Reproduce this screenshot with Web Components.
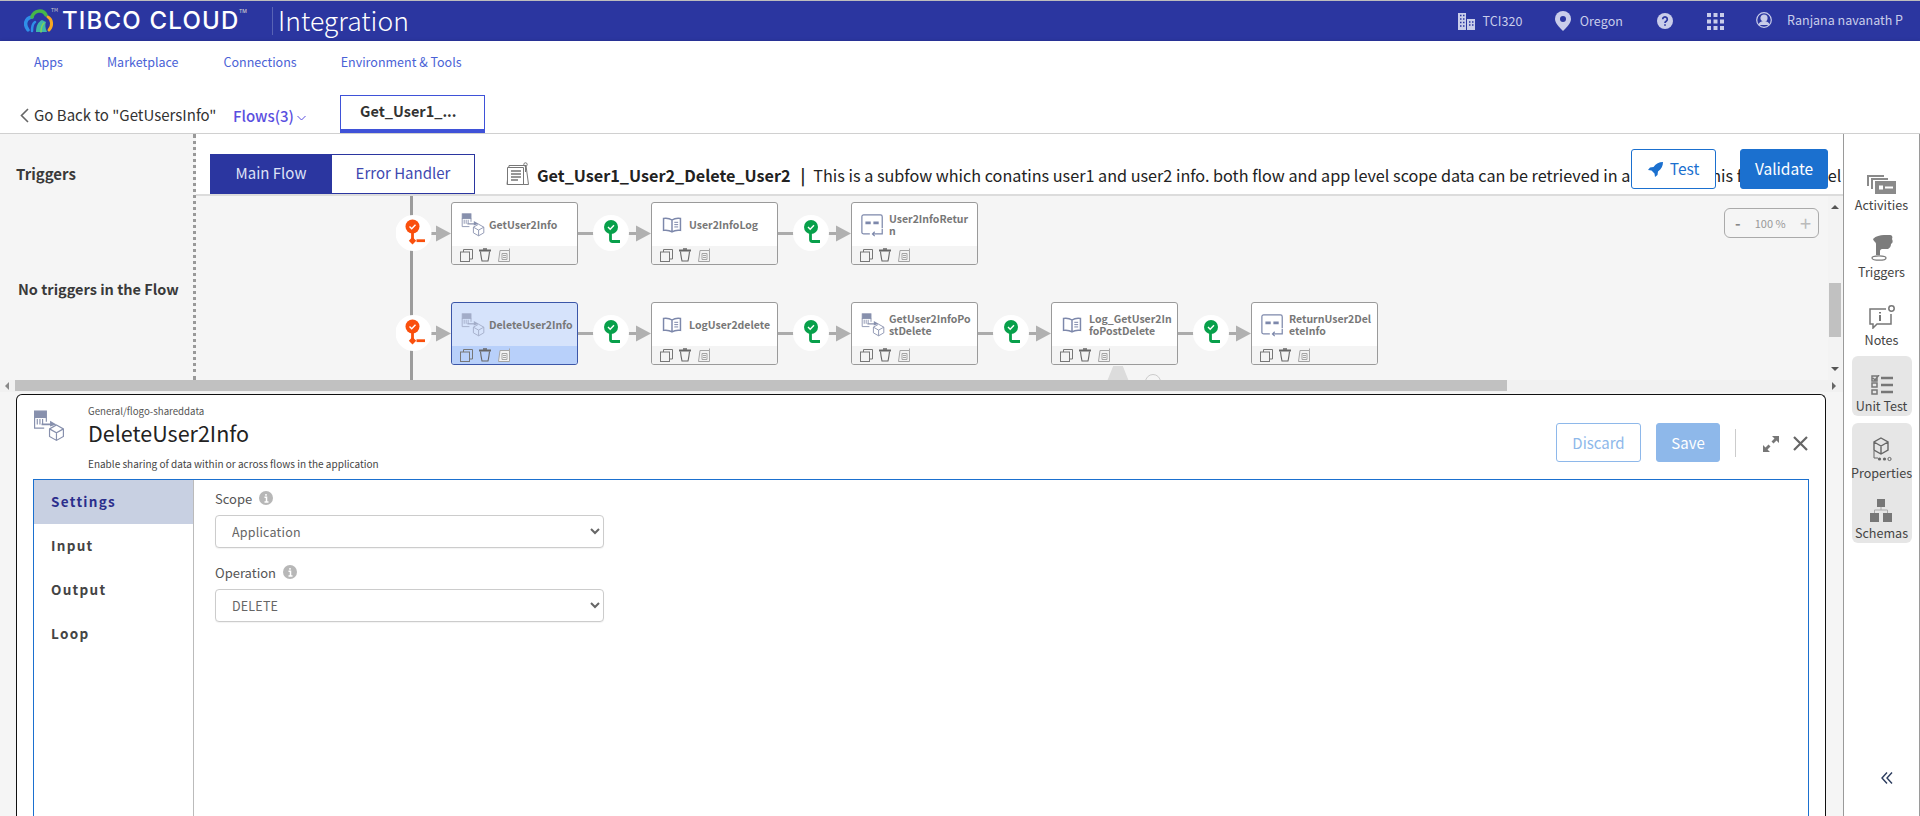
<!DOCTYPE html>
<html>
<head>
<meta charset="utf-8">
<title>TIBCO Cloud Integration</title>
<style>
    html, body { margin: 0; height: 816px; overflow: hidden; background: #fff; }
    body { font-family: "Noto Sans CJK SC", "Noto Sans", sans-serif; color: #333; display: flex; flex-direction: column; border-top: 1px solid #bdbdbd; box-sizing: border-box; }
    flow-workspace { flex: 1; min-height: 0; }
</style>
</head>
<body>
<app-header></app-header>
<app-nav></app-nav>
<flow-bar></flow-bar>
<flow-workspace>
    <flow-canvas slot="canvas">
        <flow-row>
            <flow-link kind="branch"></flow-link>
            <flow-node name="GetUser2Info" kind="data"></flow-node>
            <flow-link></flow-link>
            <flow-node name="User2InfoLog" kind="log"></flow-node>
            <flow-link></flow-link>
            <flow-node name="User2InfoRetur|n" kind="ret"></flow-node>
        </flow-row>
        <flow-row>
            <flow-link kind="branch"></flow-link>
            <flow-node name="DeleteUser2Info" kind="data" selected></flow-node>
            <flow-link></flow-link>
            <flow-node name="LogUser2delete" kind="log"></flow-node>
            <flow-link></flow-link>
            <flow-node name="GetUser2InfoPo|stDelete" kind="data"></flow-node>
            <flow-link></flow-link>
            <flow-node name="Log_GetUser2In|foPostDelete" kind="log"></flow-node>
            <flow-link></flow-link>
            <flow-node name="ReturnUser2Del|eteInfo" kind="ret"></flow-node>
        </flow-row>
    </flow-canvas>
    <detail-panel slot="panel"></detail-panel>
    <side-palette slot="side"></side-palette>
</flow-workspace>

<script>
(() => {
    const FONT = '"Noto Sans CJK SC", "Noto Sans", sans-serif';

    const icons = {
        data: `<svg width="30" height="30" viewBox="0 0 30 30" fill="none" stroke="#8790ad" stroke-width="1.1">
            <rect x="1.5" y="1" width="11" height="6" fill="#8790ad"/>
            <path d="M1.5 7v10h9M4 8.5v5M6.5 8.5v5M9 8.5v5M12.5 7v4"/>
            <path d="M8 13.5h10" stroke-width="1.6"/><path d="M16 10l6 3.5-6 2z" fill="#8790ad" stroke="none"/>
            <path d="M22 14l6.500 3.700v7.100L22 28.500l-6.500-3.700v-7.100zM15.500 17.700l6.500 3.700 6.500-3.700M22 21.400v7.100"/>
        </svg>`,
        log: `<svg width="26" height="26" viewBox="0 0 26 26" fill="none" stroke="#7d88ab" stroke-width="1.9">
            <path d="M13 6.500C10 4.500 6 4 2 4.500v15.500c4-.5 8 0 11 2 3-2 7-2.500 11-2V4.500c-4-.5-8 0-11 2zM13 6.500V22"/>
            <path d="M16 9.500h5M16 12.500h5M16 15.500h5" stroke-width="1.300"/>
        </svg>`,
        ret: `<svg width="26" height="26" viewBox="0 0 26 26" fill="none" stroke="#7d88ab" stroke-width="1.4">
            <path d="M10 22.500H3a2 2 0 0 1-2-2V3a2 2 0 0 1 2-2h19a2 2 0 0 1 2 2v13"/>
            <path d="M5 10h6M14 10h6" stroke-width="3"/>
            <path d="M24 17v5.500H13M15.500 20l-2.500 2.500 2.500 2.500"/>
        </svg>`,
        copy: `<svg width="13" height="13" viewBox="0 0 13 13" fill="none" stroke="#777"><rect x=".5" y="3" width="9" height="9.500"/><path d="M3.500 3V.5h9v9.500H9.500"/></svg>`,
        trash: `<svg width="12" height="14" viewBox="0 0 12 14" fill="none" stroke="#666" stroke-width="1.100"><path d="M0 2.500h12" stroke-width="1.800"/><path d="M4 1h4" stroke-width="1.400"/><path d="M1.500 3.500c.3 3 .7 6 1.500 9.500h6c.8-3.500 1.200-6.500 1.500-9.500"/></svg>`,
        note: `<svg width="15" height="14" viewBox="0 0 15 14" fill="none" stroke="#a5a5a5"><path d="M3 2.500h9.500V13.500H1.500z" fill="#f2f2f2"/><path d="M5 5.500h5v6h-5zM6 7.500h3M6 9.500h3"/><path d="M12.500 2.500V.5"/></svg>`
    };

    // small helper so every element gets an open shadow root from a template
    function define(name, html, ready) {
        const template = document.createElement('template');
        template.innerHTML = html;
        customElements.define(name, class extends HTMLElement {
            constructor() {
                super();
                this.root = this.attachShadow({ mode: 'open' });
                this.root.appendChild(template.content.cloneNode(true));
            }
            connectedCallback() {
                if (ready) ready(this, this.root);
            }
        });
    }

    define('app-header', `
        <style>
            :host { display: flex; align-items: center; height: 40px; background: #2b36a0; color: #c9cdea; font-family: ${FONT}; flex: none; }
            .logo { margin-left: 24px; width: 30px; height: 26px; flex: none; }
            .tm0 { font-size: 5px; line-height: 6px; color: #ccc; margin: -22px 0 0 -3px; width: 11px; flex: none; }
            .brand { font: 500 24px/40px Inter, sans-serif; letter-spacing: 1.200px; color: #fff; width: 210px; flex: none; white-space: nowrap; position: relative; }
            .tm { font-size: 5px; position: absolute; top: -10px; left: 177px; color: #ccc; letter-spacing: 0; }
            .sep { width: 1px; height: 28px; background: #5963b5; margin: 0 5px 0 0; flex: none; }
            .product { font-size: 26.500px; font-weight: 300; color: #fff; line-height: 40px; margin-top: -3px; }
            .right { margin-left: auto; display: flex; align-items: center; font-size: 12.500px; line-height: 40px; letter-spacing: .1px; }
            svg { display: block; }
        </style>
        <svg class="logo" viewBox="0 0 30 26" fill="none" stroke-linecap="round">
            <path d="M4 22C0 17 1 10 8 9" stroke="#2f8fe8" stroke-width="3.500"/>
            <path d="M8 9C10 2 19 1 22 7" stroke="#46b649" stroke-width="3.500"/>
            <path d="M24 9c4 2 5 9 1 13" stroke="#f7a823" stroke-width="3"/>
            <path d="M11 14c-3 2-3 6-3 9" stroke="#2f8fe8" stroke-width="2.500"/>
            <path d="M18 12c-4 2-6 6-6 12h11c-2-4-2-8-1-10z" fill="#3fb6a8"/>
            <path d="M17 24c0-4 1-7 3-9" stroke="#7dd35a" stroke-width="1.500"/>
        </svg>
        <div class="tm0">TM</div>
        <div class="brand">TIBCO CLOUD<span class="tm">TM</span></div>
        <div class="sep"></div>
        <div class="product">Integration</div>
        <div class="right">
            <svg style="margin-right:7px" width="17" height="17" viewBox="0 0 17 17" fill="#c9cdea"><path d="M0 0h8v17H0zM9 6h8v11H9z"/><path d="M2 2.500h1.500M5 2.500h1.500M2 6h1.500M5 6h1.500M2 9.500h1.500M5 9.500h1.500M2 13h1.500M5 13h1.500M11 9h1.500M14 9h1.500M11 12h1.500M14 12h1.500" stroke="#2b36a0" stroke-width="1.500"/></svg>
            <span style="margin-right:32px">TCI320</span>
            <svg style="margin-right:9px" width="16" height="20" viewBox="0 0 16 20"><path d="M8 0a8 8 0 0 1 8 8c0 4-4 8-8 12-4-4-8-8-8-12a8 8 0 0 1 8-8z" fill="#c9cdea"/><circle cx="8" cy="8" r="3" fill="#2b36a0"/></svg>
            <span style="margin-right:34px">Oregon</span>
            <svg style="margin-right:34px" width="16" height="16" viewBox="0 0 16 16"><circle cx="8" cy="8" r="8" fill="#c9cdea"/><path d="M5.700 6.200a2.300 2.300 0 1 1 3.500 2c-.8.500-1.200.9-1.200 1.700M8 11.300v1.500" fill="none" stroke="#2b36a0" stroke-width="1.700"/></svg>
            <svg style="margin-right:32px" width="17" height="17" viewBox="0 0 17 17" fill="#c9cdea"><path d="M0 0h4v4H0zM6.500 0h4v4h-4zM13 0h4v4h-4zM0 6.500h4v4H0zM6.500 6.500h4v4h-4zM13 6.500h4v4h-4zM0 13h4v4H0zM6.500 13h4v4h-4zM13 13h4v4h-4z"/></svg>
            <svg style="margin-right:15px;margin-top:-3px" width="16" height="16" viewBox="0 0 16 16" fill="none" stroke="#c9cdea" stroke-width="1.200"><circle cx="8" cy="8" r="7.300"/><circle cx="8" cy="6" r="3" fill="#c9cdea"/><path d="M2.800 13c1-2.300 3-3.300 5.200-3.300s4.200 1 5.200 3.300" fill="#c9cdea"/></svg>
            <span style="margin-right:17px;margin-top:-2px;letter-spacing:0">Ranjana navanath P</span>
        </div>
    `);

    define('app-nav', `
        <style>
            :host { display: flex; height: 44px; box-sizing: border-box; padding-bottom: 2px; align-items: center; background: #fff; box-shadow: 0 1px 4px rgba(0,0,0,.28); position: relative; flex: none; font: 12.500px/20px ${FONT}; color: #4a62d6; }
            span { white-space: nowrap; }
        </style>
        <span style="margin-left:34px">Apps</span>
        <span style="margin-left:44px">Marketplace</span>
        <span style="margin-left:45px">Connections</span>
        <span style="margin-left:44px">Environment &amp; Tools</span>
    `);

    define('flow-bar', `
        <style>
            :host { display: flex; height: 49px; box-sizing: border-box; border-bottom: 1px solid #d0d0d0; flex: none; background: #fff; font-family: ${FONT}; position: relative; }
            .back { display: flex; align-items: center; margin-left: 20px; font-size: 15px; line-height: 20px; color: #333; margin-top: 13px; height: 34px; width: 213px; white-space: nowrap; }
            .back svg { margin-right: 5px; }
            .flows { display: flex; align-items: center; font-size: 15px; font-weight: 500; color: #5a4fe0; line-height: 20px; height: 34px; margin-top: 14px; width: 107px; }
            .flows svg { margin-left: 3px; margin-top: 3px; }
            .tab { width: 145px; height: 38px; box-sizing: border-box; margin-top: 10px; border: 1px solid #3f52d8; border-bottom: 4px solid #3f52d8; font-size: 14.500px; font-weight: 700; line-height: 30px; padding-left: 19px; color: #333; }
        </style>
        <div class="back">
            <svg width="9" height="15" viewBox="0 0 9 15" fill="none" stroke="#666" stroke-width="1.600"><path d="M8 1L1.500 7.500 8 14"/></svg>
            Go Back to "GetUsersInfo"
        </div>
        <div class="flows">Flows(3)
            <svg width="9" height="6" viewBox="0 0 9 6" fill="none" stroke="#5a4fe0"><path d="M.5 1l4 4 4-4"/></svg>
        </div>
        <div class="tab">Get_User1_...</div>
    `);

    define('flow-workspace', `
        <style>
            :host { display: flex; background: #f5f5f5; font-family: ${FONT}; }
            .left { width: 1843px; flex: none; display: flex; flex-direction: column; min-height: 0; }
            .upper { display: flex; height: 246px; flex: none; }
            .triggers { width: 196px; box-sizing: border-box; flex: none; border-right: 3px dotted #999; font-size: 15px; font-weight: 700; line-height: 20px; color: #3a3a3a; }
            .triggers div:first-child { margin: 30px 0 0 16px; }
            .triggers div:last-child { margin: 95px 0 0 18px; font-size: 14.500px; }
            .main { flex: 1; min-width: 0; display: flex; flex-direction: column; }
            .hbar { height: 12px; flex: none; display: flex; background: #f1f1f1; position: relative; }
            .hbar i { display: block; margin-left: 15px; width: 1492px; height: 11px; background: #c1c1c1; }
            .hbar b { position: absolute; top: 2px; width: 0; height: 0; border: 4px solid transparent; }
            .hbar .l { left: 1px; border-right-color: #888; }
            .hbar .r { left: 1832px; border-left-color: #666; }
            ::slotted(detail-panel) { flex: 1; min-height: 0; }
        </style>
        <div class="left">
            <div class="upper">
                <div class="triggers"><div>Triggers</div><div>No triggers in the Flow</div></div>
                <div class="main">
                    <flow-toolbar></flow-toolbar>
                    <slot name="canvas"></slot>
                </div>
            </div>
            <div class="hbar"><b class="l"></b><i></i><b class="r"></b></div>
            <slot name="panel"></slot>
        </div>
        <slot name="side"></slot>
    `);

    define('flow-toolbar', `
        <style>
            :host { display: flex; height: 60px; flex: none; background: #fff; position: relative; overflow: hidden; font-family: ${FONT}; }
            .tabs { display: flex; margin: 20px 0 0 14px; height: 40px; box-sizing: border-box; border: 1px solid #2b36a0; font-size: 15px; line-height: 36px; text-align: center; flex: none; }
            .tabs div { width: 122px; color: #3f49b0; }
            .tabs div:first-child { background: #2b36a0; color: #dfe2f6; margin: -1px 0 -1px -1px; padding: 1px 0; }
            .title { display: flex; align-items: center; margin: 26px 0 0 30px; height: 30px; white-space: nowrap; font-size: 16.200px; line-height: 24px; color: #222; flex: none; }
            .title svg { margin-right: 7px; margin-top: -2px; }
            .title b { font-weight: 700; }
            .title .pipe { margin: 0 8px 0 10px; font-weight: 700; }
            .btn { position: absolute; top: 15px; height: 40px; box-sizing: border-box; border-radius: 3px; font-size: 15.500px; line-height: 36px; text-align: center; }
            .test { left: 1435px; width: 85px; border: 1px solid #1b70cf; background: #fff; color: #1b70cf; display: flex; justify-content: center; align-items: center; padding-bottom: 2px; }
            .test svg { margin-right: 7px; margin-top: 2px; }
            .validate { left: 1544px; width: 88px; background: #1b70cf; color: #fff; border: 1px solid #1b70cf; }
        </style>
        <div class="tabs"><div>Main Flow</div><div style="width:142px">Error Handler</div></div>
        <div class="title">
            <svg width="25" height="24" viewBox="0 0 25 24" fill="none" stroke="#777"><path d="M4 3.500h17L23.500 22.500H2z" fill="#fff"/><path d="M2.500 5.500h16v17h-16z" fill="#fff"/><path d="M6 9h10M6 12h10M6 15h10M6 18h7" stroke-width="1.300"/><circle cx="20.500" cy="2.500" r="1.700"/><path d="M20.500 4v6"/></svg>
            <b>Get_User1_User2_Delete_User2</b><span class="pipe">|</span><span>This is a subfow which conatins user1 and user2 info. both flow and app level scope data can be retrieved in a subflow. This flow app level</span>
        </div>
        <div class="btn test">
            <svg width="15" height="15" viewBox="0 0 15 15" fill="#1b70cf"><path d="M15 0c-4 0-7 1.500-9.500 5L2 5.500 0 8l3.500 .5 3 3L7 15l2.500-2 .5-3.500C13.500 7 15 4 15 0z"/></svg>
            Test
        </div>
        <div class="btn validate">Validate</div>
    `);

    define('flow-canvas', `
        <style>
            :host { display: flex; flex-direction: column; flex: 1; min-height: 0; gap: 37px; box-sizing: border-box; padding: 6px 0 0 200px; background: #f5f5f5; border-top: 2px solid #dcdcdc; position: relative; overflow: hidden; }
            .trunk { position: absolute; left: 214px; top: 0; bottom: 0; width: 3px; background: #9c9c9c; }
            .zoom { position: absolute; left: 1528px; top: 12px; width: 95px; height: 30px; box-sizing: border-box; border: 1px solid #aaa; border-radius: 6px; display: flex; align-items: center; justify-content: space-between; padding: 0 7px 0 10px; color: #999; font-size: 11px; line-height: 16px; }
            .zoom b { font-size: 15px; font-weight: 700; color: #888; }
            .zoom b:last-child { font-size: 20px; color: #bbb; font-weight: 400; }
            .vbar { position: absolute; right: 1px; top: 0; bottom: 0; width: 14px; background: #f3f3f3; }
            .vbar i { position: absolute; left: 1px; top: 87px; width: 12px; height: 54px; background: #c1c1c1; }
            .vbar b { position: absolute; left: 3px; width: 0; height: 0; border: 4px solid transparent; }
            .ghost { position: absolute; left: 910px; top: 170px; width: 24px; height: 18px; background: #dcdcdc; clip-path: polygon(30% 0, 70% 0, 100% 100%, 0 100%); }
            .ring { position: absolute; left: 949px; top: 178px; width: 14px; height: 14px; border: 1px solid #ccc; border-radius: 50%; }
        </style>
        <div class="trunk"></div>
        <div class="ghost"></div><div class="ring"></div>
        <slot></slot>
        <div class="zoom"><b>-</b><span>100 %</span><b>+</b></div>
        <div class="vbar"><b style="top:5px;border-bottom-color:#555"></b><i></i><b style="top:171px;border-top-color:#555"></b></div>
    `);

    define('flow-row', `
        <style>:host { display: flex; height: 63px; position: relative; flex: none; }</style>
        <slot></slot>
    `);

    const PIN_CHECK = '<path d="M-3 0l2.200 2.200L3-1.800" fill="none" stroke="#fff" stroke-width="1.400"/>';

    define('flow-link', `
        <style>:host { display: block; flex: none; } svg { display: block; }</style>
    `, (el, root) => {
        const branch = el.getAttribute('kind') === 'branch';
        const w = branch ? 55 : 73;
        const cx = branch ? 17.5 : 33;
        const art = branch
            ? `<g transform="translate(${cx - 1},24.500)"><circle r="7" fill="#fa4f0c"/>${PIN_CHECK}<path d="M0 5v9" stroke="#fa4f0c" stroke-width="2.800"/><path d="M0 10.500l3.700 3.700L0 18l-3.700-3.800z" fill="#fa4f0c"/><path d="M4 14.200h8.500" stroke="#fa4f0c" stroke-width="2.800"/></g>`
            : `<g transform="translate(${cx},25)"><circle r="7" fill="#08a04b"/>${PIN_CHECK}<path d="M-.5 6v6.500q0 2 2 2H9" fill="none" stroke="#08a04b" stroke-width="2.800"/></g>`;
        root.innerHTML += `<svg width="${w}" height="63" viewBox="0 0 ${w} 63">
            <path d="M0 31.500H${w - 10}" stroke="#ababab" stroke-width="3"/>
            <circle cx="${cx}" cy="31" r="18" fill="#fff"/>
            <path d="M${w - 15} 23.500L${w} 31.500L${w - 15} 39.500z" fill="#b0b0b0"/>
            ${art}
        </svg>`;
    });

    define('flow-node', `
        <style>
            :host { display: flex; flex-direction: column; flex: none; width: 127px; height: 63px; box-sizing: border-box; border: 1px solid #9a9a9a; border-radius: 3px; background: #fff; overflow: hidden; font-family: ${FONT}; }
            :host([selected]) { background: #d6e3fb; border-color: #3b56a8; }
            .body { flex: 1; display: flex; align-items: center; min-height: 0; }
            .ic { width: 37px; box-sizing: border-box; flex: none; display: flex; margin-top: 1px; }
            :host([selected]) .ic { opacity: .65; }
            .name { white-space: nowrap; font-size: 10.500px; font-weight: 700; line-height: 12px; color: #777; margin-top: 1px; }
            .foot { height: 18px; flex: none; background: #f4f4f4; display: flex; align-items: center; gap: 6px; padding-left: 8px; }
            :host([selected]) .foot { background: #b8d0fa; }
            svg { display: block; }
        </style>
        <div class="body"><div class="ic"></div><div class="name"></div></div>
        <div class="foot"></div>
    `, (el, root) => {
        const kind = el.getAttribute('kind');
        const ic = root.querySelector('.ic');
        ic.innerHTML = icons[kind];
        const svg = ic.firstElementChild;
        const size = { data: 24, log: 20, ret: 23 }[kind];
        svg.setAttribute('width', size);
        svg.setAttribute('height', size);
        ic.style.paddingLeft = { data: '9px', log: '10px', ret: '9px' }[kind];
        // the app wraps long names mid word, "|" marks where
        const name = root.querySelector('.name');
        el.getAttribute('name').split('|').forEach((part, i) => {
            if (i) name.appendChild(document.createElement('br'));
            name.appendChild(document.createTextNode(part));
        });
        root.querySelector('.foot').innerHTML = icons.copy + icons.trash + icons.note;
    });

    define('side-item', `
        <style>
            :host { display: flex; flex-direction: column; align-items: center; justify-content: flex-end; color: #444; font: 12.600px/16px ${FONT}; white-space: nowrap; }
            svg { display: block; }
        </style>
        <slot name="icon"></slot>
        <div style="margin-top:3px"><slot></slot></div>
    `);

    define('side-palette', `
        <style>
            :host { display: flex; flex-direction: column; align-items: center; width: 77px; flex: none; box-sizing: border-box; background: #fff; border-left: 1px solid #9a9a9a; border-right: 1px solid #9a9a9a; position: relative; font-family: ${FONT}; padding-top: 41px; }
            .grp { width: 60px; background: #e6e6e6; border-radius: 6px; display: flex; flex-direction: column; align-items: center; }
            .chev { position: absolute; left: 37px; top: 638px; font-size: 0; }
        </style>
        <side-item>
            <svg slot="icon" width="29" height="19" viewBox="0 0 29 19" fill="#8a8a8a"><path d="M0 0h17v2H2v9H0zM4 3h17v2H6v9H4z"/><path d="M8 6h21v13H8z"/><path d="M12 10.500h4v4h-4zM18 11.500h8v2h-8z" fill="#fff"/></svg>
            Activities
        </side-item>
        <side-item style="margin-top:22px">
            <svg slot="icon" width="22" height="26" viewBox="0 0 22 26" fill="#7c7c7c"><path d="M2 4C5 1 9 0 13 0h6c2 0 3 2 2 4 1 2 1 4-1 5 0 2-1 4-3 5h-6c-1 0-2 1-2 2v4H5V9C5 7 3 7 2 4z"/><ellipse cx="8" cy="23" rx="7" ry="2.200" fill="none" stroke="#7c7c7c" stroke-width="1.300"/></svg>
            Triggers
        </side-item>
        <side-item style="margin-top:25px">
            <svg slot="icon" width="26" height="24" viewBox="0 0 26 24" fill="none" stroke="#777" stroke-width="1.500"><path d="M17 4H1v15h3v4l4-4h14v-10"/><path d="M11 7v1.500M11 10v6" stroke-width="2"/><circle cx="22.500" cy="3.500" r="2.700"/></svg>
            Notes
        </side-item>
        <div class="grp" style="margin-top:8px;height:60px;justify-content:flex-end;padding-bottom:2px;box-sizing:border-box">
            <side-item>
                <svg slot="icon" width="22" height="20" viewBox="0 0 22 20" fill="none" stroke="#777" stroke-width="1.500"><path d="M1 1h5v5H1zM1 8h5v4H1zM1 15h5v4H1zM2 3l2 2 4-5"/><path d="M10 3h12M10 10h12M10 17h12" stroke-width="2.500"/></svg>
                Unit Test
            </side-item>
        </div>
        <div class="grp" style="margin-top:7px;height:120px;padding-top:14px;box-sizing:border-box">
            <side-item>
                <svg slot="icon" width="20" height="25" viewBox="0 0 20 25" fill="none" stroke="#666" stroke-width="1.400"><path d="M9 1l7 4v8l-7 4-7-4V5zM2 5l7 4 7-4M9 9v8"/><path d="M2 14v7h4" stroke-width="1"/><circle cx="7.500" cy="22" r="1.600" fill="#666" stroke="none"/><circle cx="12.500" cy="22" r="1.600" fill="#666" stroke="none"/><circle cx="17.500" cy="22" r="1.600" fill="none" stroke-width="1"/></svg>
                Properties
            </side-item>
            <side-item style="margin-top:18px">
                <svg slot="icon" width="22" height="23" viewBox="0 0 22 23" fill="#777"><path d="M7 0h8v8H7zM0 14h9v9H0zM13 14h9v9h-9z"/><path d="M11 8v3M4.500 14v-3h13v3" fill="none" stroke="#aaa"/></svg>
                Schemas
            </side-item>
        </div>
        <svg class="chev" width="12" height="12" viewBox="0 0 12 12" fill="none" stroke="#2b3c5e" stroke-width="1.400"><path d="M6 .5L1 6l5 5.500M11 .5L6 6l5 5.500"/></svg>
    `);

    define('form-field', `
        <style>
            :host { display: block; width: 389px; font-family: ${FONT}; }
            .lbl { display: flex; align-items: center; font-size: 13px; line-height: 20px; color: #555; }
            .lbl svg { margin-left: 7px; margin-top: -3px; }
            select { display: block; width: 100%; height: 33px; margin-top: 6px; box-sizing: border-box; padding: 0 12px; border: 1px solid #ccc; border-radius: 4px; background: #fff; color: #666; font: 12.500px ${FONT}; letter-spacing: .2px; box-shadow: 0 1px 1px rgba(0,0,0,.05); outline: none; }
        </style>
        <div class="lbl"><span></span>
            <svg width="14" height="14" viewBox="0 0 14 14"><circle cx="7" cy="7" r="7" fill="#b7b7b7"/><path d="M7 3v1.800M5.500 6.300H7.500v4.500M5.500 11h4" stroke="#fff" stroke-width="1.500" fill="none"/></svg>
        </div>
        <select><option></option></select>
    `, (el, root) => {
        root.querySelector('.lbl span').textContent = el.getAttribute('label');
        root.querySelector('option').textContent = el.getAttribute('value');
    });

    define('detail-panel', `
        <style>
            :host { display: flex; flex-direction: column; margin: 2px 17px 0 16px; box-sizing: border-box; border: 1.500px solid #111; border-bottom: 0; border-radius: 6px 6px 0 0; background: #fff; overflow: hidden; font-family: ${FONT}; }
            .head { display: flex; height: 84px; flex: none; padding: 0 16px; box-sizing: border-box; position: relative; }
            .ic { width: 55px; padding-top: 15px; flex: none; }
            .ic svg { display: block; width: 32px; height: 32px; }
            .txt { flex: 1; padding-top: 9px; color: #333; }
            .sub { font-size: 9.700px; line-height: 14px; color: #555; }
            .name { font-size: 21.500px; line-height: 28px; margin-top: 1px; color: #222; }
            .desc { font-size: 10px; line-height: 14px; color: #444; margin-top: 10px; }
            .acts { display: flex; align-items: flex-start; padding-top: 28px; }
            .btn { box-sizing: border-box; height: 39px; border-radius: 3px; font-size: 15px; line-height: 38px; text-align: center; }
            .discard { width: 85px; border: 1px solid #8eb8ea; color: #8eb8ea; }
            .save { width: 64px; margin-left: 15px; background: #8eb8ea; color: #fff; border: 1px solid #8eb8ea; }
            .div { width: 1px; height: 28px; background: #ccc; margin: 6px 27px 0 15px; }
            .acts svg { margin-top: 13px; display: block; }
            .box { flex: 1; min-height: 0; margin: 0 16px; border: 1px solid #1b70cf; border-bottom: 0; display: flex; }
            .menu { width: 160px; flex: none; box-sizing: border-box; border-right: 1px solid #bbb; font-size: 13.500px; font-weight: 700; letter-spacing: 1.300px; color: #444; }
            .menu div { height: 44px; line-height: 42px; padding-left: 17px; }
            .menu .on { background: #c8d0e2; color: #2b2e8c; }
            .form { padding: 9px 0 0 21px; display: flex; flex-direction: column; gap: 15px; }
        </style>
        <div class="head">
            <div class="ic">${icons.data}</div>
            <div class="txt">
                <div class="sub">General/flogo-shareddata</div>
                <div class="name">DeleteUser2Info</div>
                <div class="desc">Enable sharing of data within or across flows in the application</div>
            </div>
            <div class="acts">
                <div class="btn discard">Discard</div>
                <div class="btn save">Save</div>
                <div class="div"></div>
                <svg width="16" height="16" viewBox="0 0 16 16" fill="#777"><path d="M16 0v7l-2.500-2.500-3 3-2-2 3-3L9 0zM0 16V9l2.500 2.500 3-3 2 2-3 3L7 16z"/></svg>
                <svg style="margin:13px 1px 0 14px" width="15" height="15" viewBox="0 0 15 15" fill="none" stroke="#666" stroke-width="2.200"><path d="M1 1l13 13M14 1L1 14"/></svg>
            </div>
        </div>
        <div class="box">
            <div class="menu"><div class="on">Settings</div><div>Input</div><div>Output</div><div>Loop</div></div>
            <div class="form">
                <form-field label="Scope" value="Application"></form-field>
                <form-field label="Operation" value="DELETE"></form-field>
            </div>
        </div>
    `);
})();
</script>
</body>
</html>
